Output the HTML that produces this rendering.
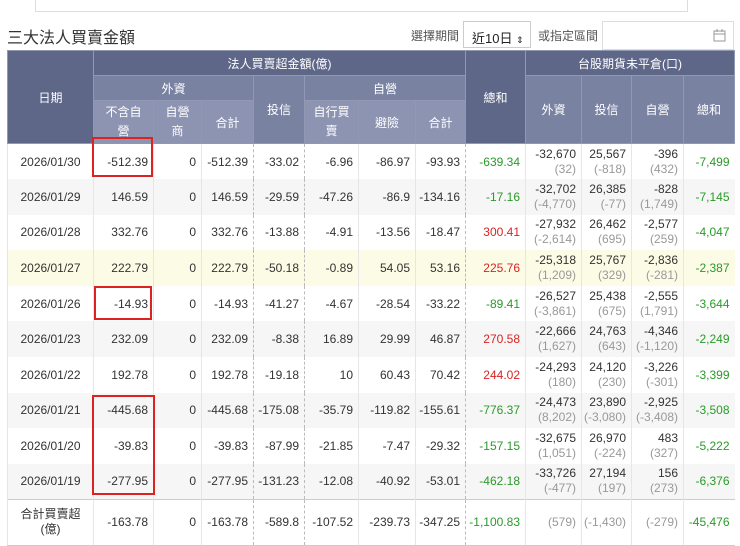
<!DOCTYPE html>
<html><head><meta charset="utf-8"><style>
*{margin:0;padding:0;box-sizing:border-box}
body{width:740px;height:545px;overflow:hidden;background:#fff;font-family:"Liberation Sans","Noto Sans CJK TC",sans-serif;color:#333;position:relative}
.topbox{position:absolute;left:35px;top:-2px;width:653px;height:14px;border:1px solid #ddd;border-top:none}
.title{position:absolute;left:7px;top:24px;font-size:16px;color:#333}
.lbl{position:absolute;top:27px;font-size:12px;color:#555}
.sel{position:absolute;left:463px;top:21px;width:68px;height:27px;border:1px solid #ccc;font-size:13px;padding:6px 0 0 8px;color:#222}
.date{position:absolute;left:602px;top:21px;width:132px;height:29px;border:1px solid #ddd}
table{position:absolute;left:7px;top:50px;border-collapse:collapse;table-layout:fixed;width:727px}
th{color:#fff;font-weight:normal;font-size:12px;border:1px solid #9198b4;text-align:center}
.d{background:#5f6789}.m{background:#7a82a2}.l{background:#8d94b2}
td{font-size:12px;height:35.6px;text-align:right;padding-right:5px;border-left:1px solid #e6e6e6;white-space:nowrap}
td.c{text-align:center;padding:0}
tr.g td{background:#f6f6f6}tr.y td{background:#fcfce6}
.gr{color:#2a9a2a}.rd{color:#d22}.s{color:#999}
td.dash{border-left:1px dashed #bbb}
.lh{line-height:15px}
th.lh{line-height:19px}
tr.t td{border-top:1px solid #ccc;height:46px;border-bottom:1px solid #ccc}
.box{position:absolute;border:2px solid #d22}
</style></head><body>
<div class="topbox"></div>
<div class="title">三大法人買賣金額</div>
<div class="lbl" style="left:411px">選擇期間</div>
<div class="sel">近10日 <span style="font-size:9px">⇕</span></div>
<div class="lbl" style="left:538px">或指定區間</div>
<div class="date"><svg style="position:absolute;right:7px;top:7px" width="13" height="13" viewBox="0 0 13 13"><rect x="1" y="2" width="11" height="10" fill="none" stroke="#999"/><line x1="1" y1="5" x2="12" y2="5" stroke="#999"/><line x1="4" y1="0" x2="4" y2="3" stroke="#999"/><line x1="9" y1="0" x2="9" y2="3" stroke="#999"/></svg></div>
<table>
<colgroup><col style="width:86px"><col style="width:60px"><col style="width:48px"><col style="width:52px"><col style="width:51px"><col style="width:54px"><col style="width:57px"><col style="width:50px"><col style="width:60px"><col style="width:56px"><col style="width:50px"><col style="width:52px"><col style="width:51px"></colgroup>
<tr style="height:25px"><th rowspan="3" class="d">日期</th><th colspan="7" class="d">法人買賣超金額(億)</th><th rowspan="3" class="d">總和</th><th colspan="4" class="d">台股期貨未平倉(口)</th></tr>
<tr style="height:25px"><th colspan="3" class="m">外資</th><th rowspan="2" class="m">投信</th><th colspan="3" class="m">自營</th><th rowspan="2" class="m">外資</th><th rowspan="2" class="m">投信</th><th rowspan="2" class="m">自營</th><th rowspan="2" class="m">總和</th></tr>
<tr style="height:43px"><th class="l lh">不含自<br>營</th><th class="l lh">自營<br>商</th><th class="l">合計</th><th class="l lh">自行買<br>賣</th><th class="l">避險</th><th class="l">合計</th></tr>
<tr><td class="c">2026/01/30</td><td>-512.39</td><td>0</td><td>-512.39</td><td class="dash">-33.02</td><td class="dash">-6.96</td><td>-86.97</td><td>-93.93</td><td class="dash gr">-639.34</td><td class="lh">-32,670<br><span class="s">(32)</span></td><td class="lh">25,567<br><span class="s">(-818)</span></td><td class="lh">-396<br><span class="s">(432)</span></td><td class="gr">-7,499</td></tr>
<tr class="g"><td class="c">2026/01/29</td><td>146.59</td><td>0</td><td>146.59</td><td class="dash">-29.59</td><td class="dash">-47.26</td><td>-86.9</td><td>-134.16</td><td class="dash gr">-17.16</td><td class="lh">-32,702<br><span class="s">(-4,770)</span></td><td class="lh">26,385<br><span class="s">(-77)</span></td><td class="lh">-828<br><span class="s">(1,749)</span></td><td class="gr">-7,145</td></tr>
<tr><td class="c">2026/01/28</td><td>332.76</td><td>0</td><td>332.76</td><td class="dash">-13.88</td><td class="dash">-4.91</td><td>-13.56</td><td>-18.47</td><td class="dash rd">300.41</td><td class="lh">-27,932<br><span class="s">(-2,614)</span></td><td class="lh">26,462<br><span class="s">(695)</span></td><td class="lh">-2,577<br><span class="s">(259)</span></td><td class="gr">-4,047</td></tr>
<tr class="y"><td class="c">2026/01/27</td><td>222.79</td><td>0</td><td>222.79</td><td class="dash">-50.18</td><td class="dash">-0.89</td><td>54.05</td><td>53.16</td><td class="dash rd">225.76</td><td class="lh">-25,318<br><span class="s">(1,209)</span></td><td class="lh">25,767<br><span class="s">(329)</span></td><td class="lh">-2,836<br><span class="s">(-281)</span></td><td class="gr">-2,387</td></tr>
<tr><td class="c">2026/01/26</td><td>-14.93</td><td>0</td><td>-14.93</td><td class="dash">-41.27</td><td class="dash">-4.67</td><td>-28.54</td><td>-33.22</td><td class="dash gr">-89.41</td><td class="lh">-26,527<br><span class="s">(-3,861)</span></td><td class="lh">25,438<br><span class="s">(675)</span></td><td class="lh">-2,555<br><span class="s">(1,791)</span></td><td class="gr">-3,644</td></tr>
<tr class="g"><td class="c">2026/01/23</td><td>232.09</td><td>0</td><td>232.09</td><td class="dash">-8.38</td><td class="dash">16.89</td><td>29.99</td><td>46.87</td><td class="dash rd">270.58</td><td class="lh">-22,666<br><span class="s">(1,627)</span></td><td class="lh">24,763<br><span class="s">(643)</span></td><td class="lh">-4,346<br><span class="s">(-1,120)</span></td><td class="gr">-2,249</td></tr>
<tr><td class="c">2026/01/22</td><td>192.78</td><td>0</td><td>192.78</td><td class="dash">-19.18</td><td class="dash">10</td><td>60.43</td><td>70.42</td><td class="dash rd">244.02</td><td class="lh">-24,293<br><span class="s">(180)</span></td><td class="lh">24,120<br><span class="s">(230)</span></td><td class="lh">-3,226<br><span class="s">(-301)</span></td><td class="gr">-3,399</td></tr>
<tr class="g"><td class="c">2026/01/21</td><td>-445.68</td><td>0</td><td>-445.68</td><td class="dash">-175.08</td><td class="dash">-35.79</td><td>-119.82</td><td>-155.61</td><td class="dash gr">-776.37</td><td class="lh">-24,473<br><span class="s">(8,202)</span></td><td class="lh">23,890<br><span class="s">(-3,080)</span></td><td class="lh">-2,925<br><span class="s">(-3,408)</span></td><td class="gr">-3,508</td></tr>
<tr><td class="c">2026/01/20</td><td>-39.83</td><td>0</td><td>-39.83</td><td class="dash">-87.99</td><td class="dash">-21.85</td><td>-7.47</td><td>-29.32</td><td class="dash gr">-157.15</td><td class="lh">-32,675<br><span class="s">(1,051)</span></td><td class="lh">26,970<br><span class="s">(-224)</span></td><td class="lh">483<br><span class="s">(327)</span></td><td class="gr">-5,222</td></tr>
<tr class="g"><td class="c">2026/01/19</td><td>-277.95</td><td>0</td><td>-277.95</td><td class="dash">-131.23</td><td class="dash">-12.08</td><td>-40.92</td><td>-53.01</td><td class="dash gr">-462.18</td><td class="lh">-33,726<br><span class="s">(-477)</span></td><td class="lh">27,194<br><span class="s">(197)</span></td><td class="lh">156<br><span class="s">(273)</span></td><td class="gr">-6,376</td></tr>
<tr class="t"><td class="c lh">合計買賣超<br>(億)</td><td>-163.78</td><td>0</td><td>-163.78</td><td class="dash">-589.8</td><td class="dash">-107.52</td><td>-239.73</td><td>-347.25</td><td class="dash gr">-1,100.83</td><td class="s">(579)</td><td class="s">(-1,430)</td><td class="s">(-279)</td><td class="gr">-45,476</td></tr>
</table>
<div class="box" style="left:92px;top:137px;width:61px;height:40px"></div>
<div class="box" style="left:94px;top:286px;width:58px;height:34px"></div>
<div class="box" style="left:92px;top:395px;width:63px;height:100px"></div>
</body></html>
